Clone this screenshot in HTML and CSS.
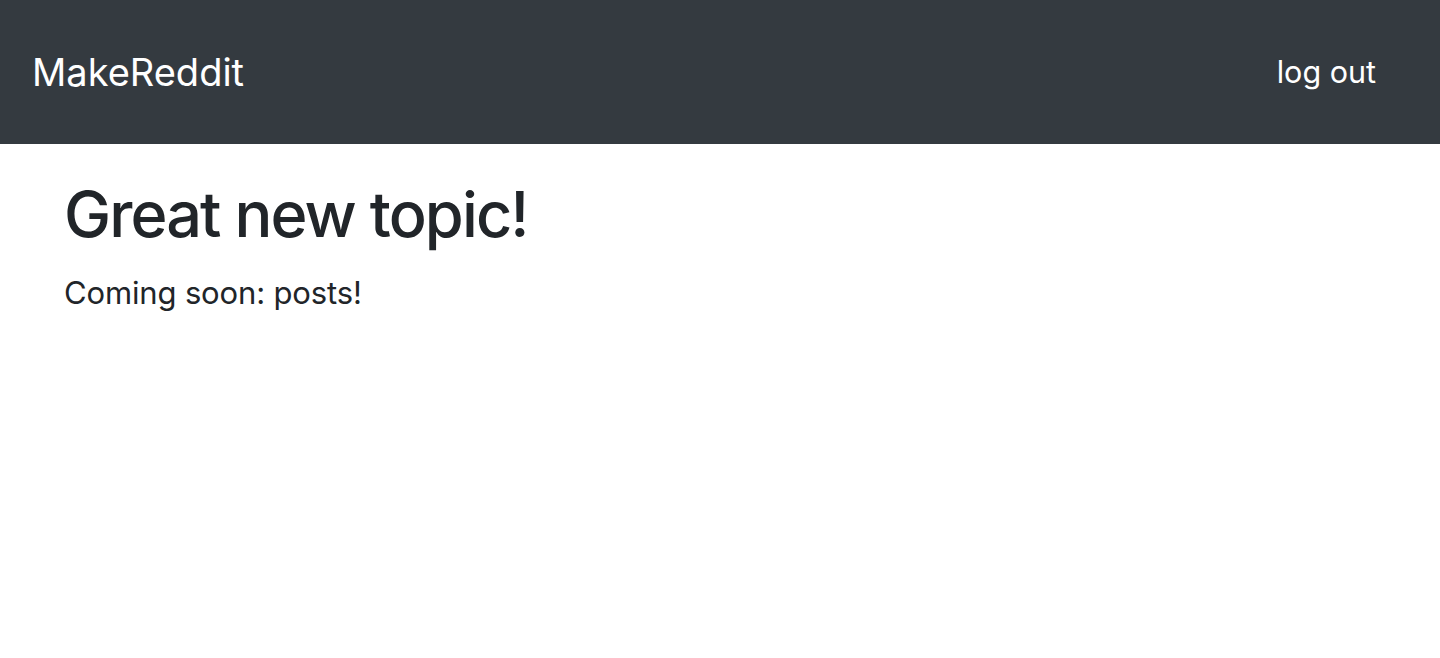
FILE: index.html
```html
<!DOCTYPE html>
<html lang="en">
<head>
<meta charset="utf-8">
<title>MakeReddit</title>
<link rel="stylesheet" href="styles.css">
</head>
<body>
<nav class="navbar">
  <a class="brand" href="#">MakeReddit</a>
  <a class="nav-link" href="#">log out</a>
</nav>
<main class="content">
  <h1 class="title">Great new topic!</h1>
  <p class="lead">Coming soon: posts!</p>
</main>
</body>
</html>
```
FILE: styles.css
```css
html, body {
  margin: 0;
  padding: 0;
}
body {
  font-family: Inter, "Noto Sans", sans-serif;
  color: #212529;
  background: #fff;
}
.navbar {
  display: flex;
  justify-content: space-between;
  align-items: center;
  height: 144px;
  padding: 0 64px 0 32px;
  background: #343a40;
}
.brand {
  color: #fff;
  text-decoration: none;
  font-size: 38px;
  line-height: 1;
}
.nav-link {
  color: #fff;
  text-decoration: none;
  font-size: 30.5px;
  line-height: 1;
}
.content {
  padding: 33px 64px 0 64px;
}
.title {
  margin: 0 0 17px 0;
  font-size: 63px;
  font-weight: 500;
  line-height: 1.2;
  letter-spacing: -1.9px;
}
.lead {
  margin: 0;
  font-size: 31px;
  line-height: 1.5;
  letter-spacing: -0.15px;
}
```
